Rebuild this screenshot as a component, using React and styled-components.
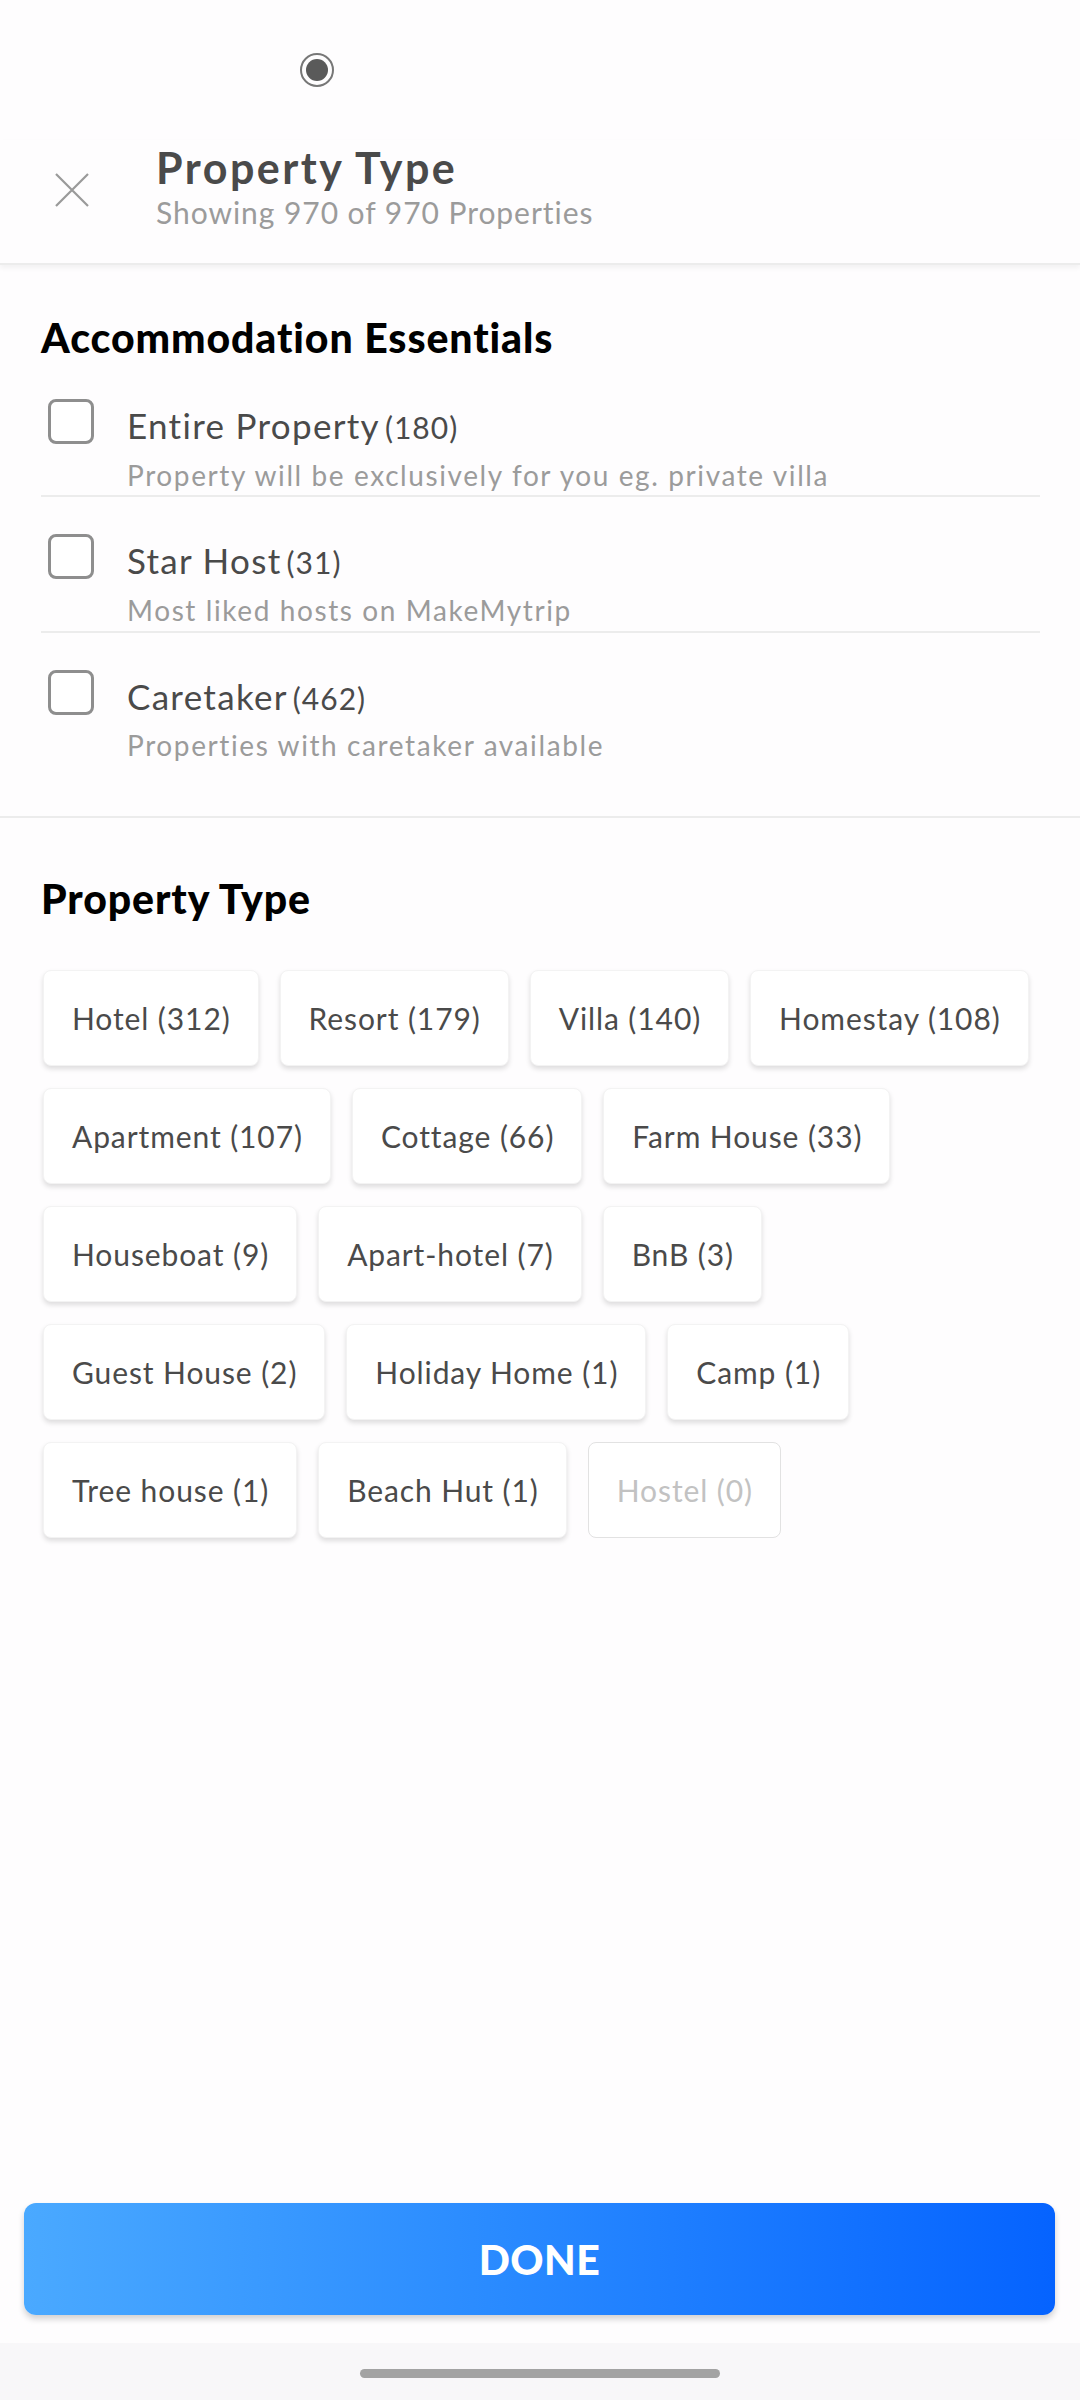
import React from 'react'
import styled, { createGlobalStyle } from 'styled-components'

const essentials = [
  { name: 'Entire Property', count: 180, desc: 'Property will be exclusively for you eg. private villa' },
  { name: 'Star Host', count: 31, desc: 'Most liked hosts on MakeMytrip' },
  { name: 'Caretaker', count: 462, desc: 'Properties with caretaker available' },
]

const types = [
  ['Hotel', 312], ['Resort', 179], ['Villa', 140], ['Homestay', 108],
  ['Apartment', 107], ['Cottage', 66], ['Farm House', 33],
  ['Houseboat', 9], ['Apart-hotel', 7], ['BnB', 3],
  ['Guest House', 2], ['Holiday Home', 1], ['Camp', 1],
  ['Tree house', 1], ['Beach Hut', 1], ['Hostel', 0],
]

const App = () => {
  return (
    <Page>
      <GlobalStyle />
      <StatusBar>
        <RecordIcon />
      </StatusBar>
      <Header>
        <CloseBtn aria-label="close">
          <svg width="34" height="34" viewBox="0 0 34 34">
            <path d="M1 1 L33 33 M33 1 L1 33" stroke="#9a9a9a" strokeWidth="2.2" fill="none" />
          </svg>
        </CloseBtn>
        <TitleBlock>
          <Title>Property Type</Title>
          <Subtitle>Showing 970 of 970 Properties</Subtitle>
        </TitleBlock>
      </Header>

      <Main>
        <Section top={48}>
          <Heading>Accommodation Essentials</Heading>
          <List>
            {essentials.map((e) => (
              <Row key={e.name}>
                <Box />
                <RowText>
                  <Label>
                    {e.name}<Count>({e.count})</Count>
                  </Label>
                  <Desc>{e.desc}</Desc>
                </RowText>
              </Row>
            ))}
          </List>
        </Section>

        <Section top={56} last>
          <Heading>Property Type</Heading>
          <Chips>
            {types.map(([name, n]) => (
              <Chip key={name} disabled={n === 0}>
                {name} ({n})
              </Chip>
            ))}
          </Chips>
        </Section>
      </Main>

      <Footer>
        <Done>DONE</Done>
      </Footer>
      <NavBar>
        <HomeBar />
      </NavBar>
    </Page>
  )
}

export default App

const GlobalStyle = createGlobalStyle`
  * { box-sizing: border-box; }
  body {
    margin: 0;
    background: #fefdfe;
    font-family: Lato, 'Noto Sans', sans-serif;
  }
`

const Page = styled.div`
  width: 1080px;
  height: 2400px;
  display: flex;
  flex-direction: column;
  background: #fefdfe;
`

const StatusBar = styled.div`
  height: 140px;
  display: flex;
  align-items: center;
  padding-left: 300px;
`

const RecordIcon = styled.div`
  width: 34px;
  height: 34px;
  border-radius: 50%;
  border: 2.5px solid #777;
  display: flex;
  align-items: center;
  justify-content: center;
  &::after {
    content: '';
    width: 22px;
    height: 22px;
    border-radius: 50%;
    background: #5a5a5a;
  }
`

const Header = styled.div`
  height: 125px;
  display: flex;
  align-items: flex-start;
  padding: 2px 0 0 55px;
  border-bottom: 2px solid #ececec;
  box-shadow: 0 3px 5px rgba(0, 0, 0, 0.05);
  position: relative;
  z-index: 1;
`

const CloseBtn = styled.div`
  width: 34px;
  height: 34px;
  margin-top: 31px;
  margin-right: 67px;
`

const TitleBlock = styled.div`
  display: flex;
  flex-direction: column;
`

const Title = styled.div`
  font-size: 43px;
  font-weight: 700;
  line-height: 1.2;
  letter-spacing: 2.5px;
  color: #4a4a4a;
`

const Subtitle = styled.div`
  font-size: 30px;
  line-height: 1.2;
  letter-spacing: 0.95px;
  color: #9b9b9b;
`

const Main = styled.div`
  flex: 1;
`

const Section = styled.div`
  padding: ${(p) => p.top}px 40px 50px 41px;
  border-bottom: ${(p) => (p.last ? 'none' : '2px solid #ececec')};
`

const Heading = styled.div`
  font-size: 41px;
  font-weight: 900;
  line-height: 1.2;
  letter-spacing: 0.9px;
  color: #000;
`

const List = styled.div`
  display: flex;
  flex-direction: column;
`

const Row = styled.label`
  display: flex;
  align-items: flex-start;
  gap: 33px;
  padding: 42px 0 3px 7px;
  border-bottom: 2px solid #ececec;
  &:last-child {
    border-bottom: none;
  }
`

const Box = styled.span`
  flex: none;
  width: 46px;
  height: 45px;
  margin-top: -5px;
  border: 3px solid #8e8e8e;
  border-radius: 8px;
  background: #fff;
`

const RowText = styled.div`
  display: flex;
  flex-direction: column;
`

const Label = styled.div`
  font-size: 35px;
  line-height: 1.2;
  letter-spacing: 1.3px;
  color: #4a4a4a;
`

const Count = styled.span`
  font-size: 30px;
  letter-spacing: 1px;
  margin-left: 5px;
`

const Desc = styled.div`
  margin-top: 12.7px;
  font-size: 28px;
  line-height: 1.2;
  letter-spacing: 1.6px;
  color: #9b9b9b;
`

const Chips = styled.div`
  margin-top: 47px;
  display: flex;
  flex-wrap: wrap;
  column-gap: 21px;
  row-gap: 22px;
  padding-left: 2px;
`

const Chip = styled.div`
  height: 96px;
  padding: 0 27px 0 28px;
  display: flex;
  align-items: center;
  font-size: 30px;
  letter-spacing: 0.9px;
  color: ${(p) => (p.disabled ? '#c2c2c2' : '#4a4a4a')};
  background: #fff;
  border-radius: 8px;
  border: 1px solid ${(p) => (p.disabled ? '#e2e2e2' : '#f3f3f3')};
  box-shadow: ${(p) => (p.disabled ? 'none' : '0 3px 5px rgba(0, 0, 0, 0.13)')};
`

const Footer = styled.div`
  padding: 0 25px 28px 24px;
`

const Done = styled.button`
  width: 100%;
  height: 112px;
  border: none;
  border-radius: 12px;
  background: linear-gradient(90deg, #4aa9ff 0%, #2a8bff 45%, #0563ff 100%);
  box-shadow: 0 4px 6px rgba(0, 0, 0, 0.18);
  color: #fff;
  font-family: Lato, 'Noto Sans', sans-serif;
  font-size: 41px;
  font-weight: 900;
  letter-spacing: 0.5px;
`

const NavBar = styled.div`
  height: 57px;
  background: #f8f7f9;
  display: flex;
  justify-content: center;
  padding-top: 26px;
`

const HomeBar = styled.div`
  width: 360px;
  height: 9px;
  border-radius: 5px;
  background: #a3a3a3;
`
